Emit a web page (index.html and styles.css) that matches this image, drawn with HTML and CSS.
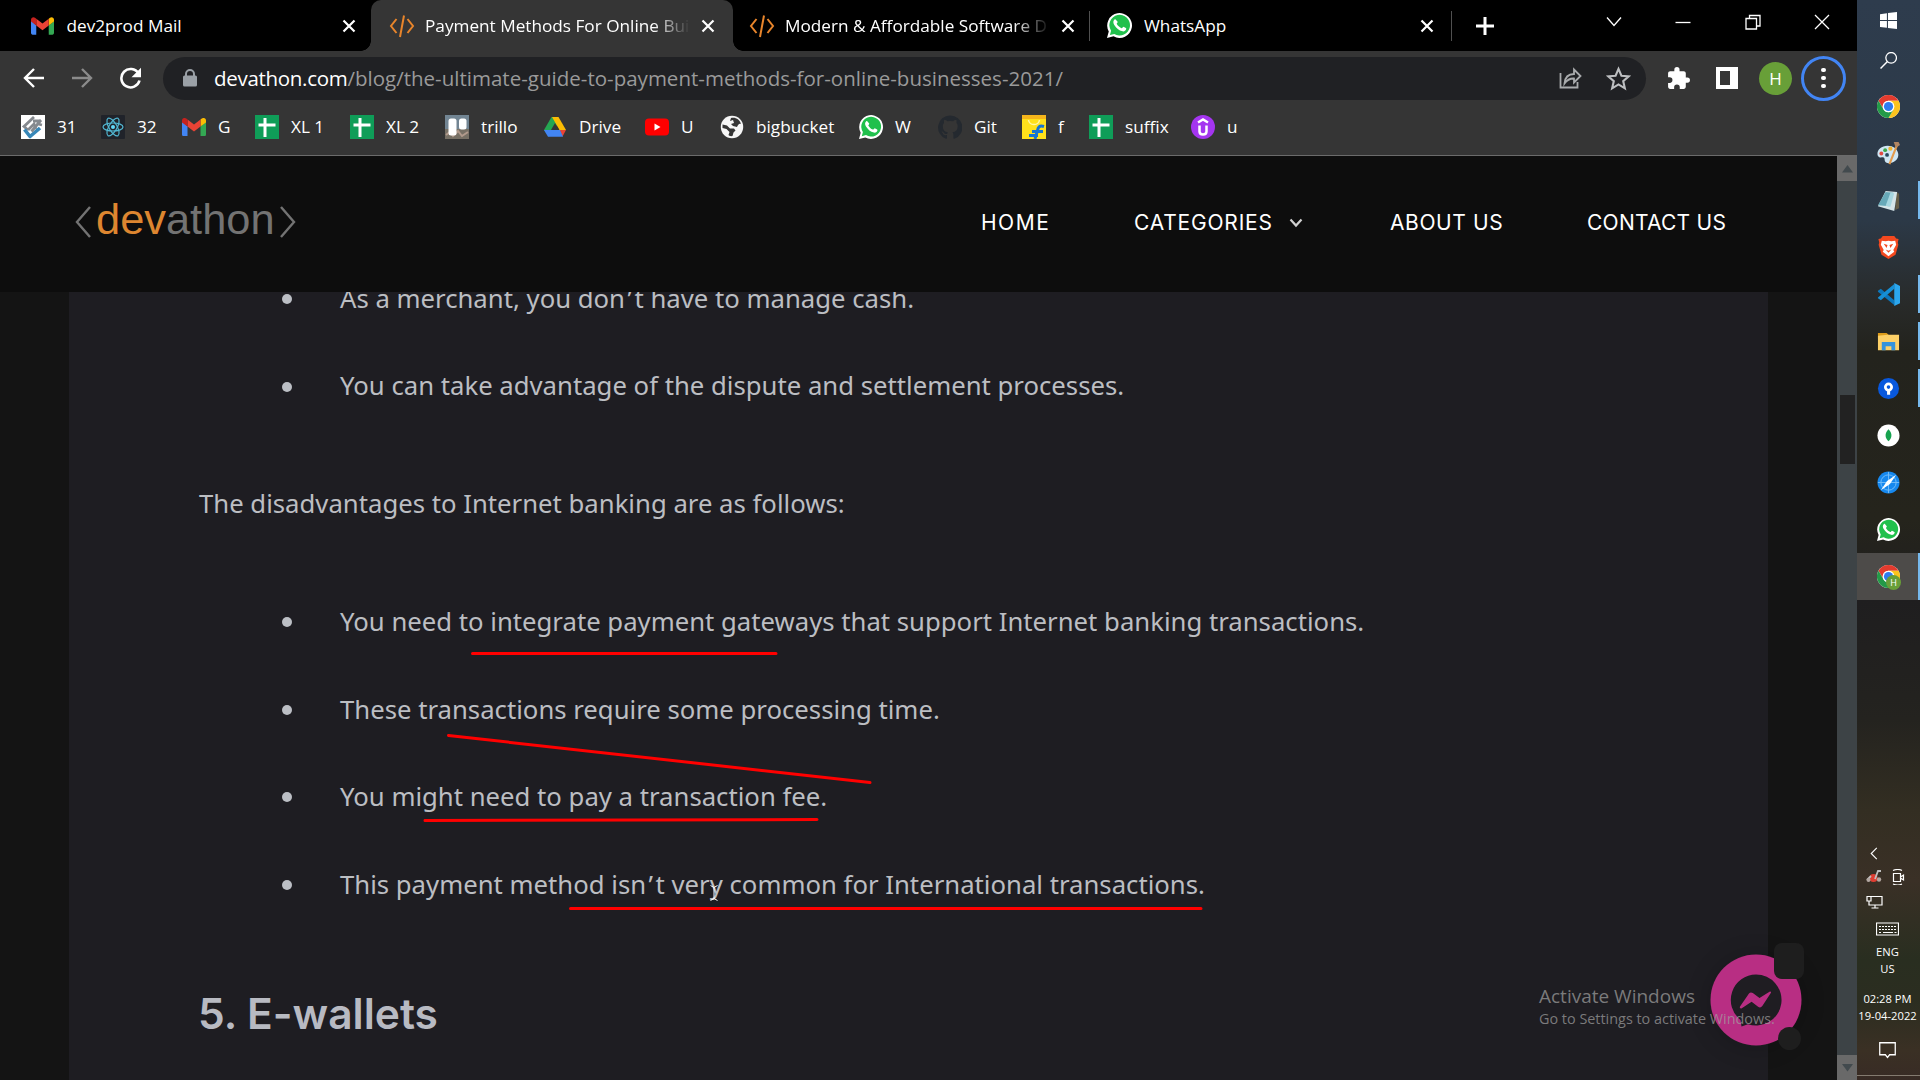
FILE: index.html
```html
<!DOCTYPE html>
<html lang="en">
<head>
<meta charset="utf-8">
<title>Payment Methods For Online Businesses</title>
<link rel="stylesheet" href="styles.css">
</head>
<body>
<svg class="defs" width="0" height="0">
  <symbol id="gmail" viewBox="0 0 24 18"><path fill="#4285f4" d="M0 3v13.4C0 17.300.7 18 1.600 18H5.500V8.500z"/><path fill="#34a853" d="M18.500 18h3.900c.9 0 1.600-.7 1.600-1.600V4l-5.500 4.500z"/><path fill="#fbbc04" d="M18.500 1.500v7L24 4.400V2.500c0-2.300-2.500-3.200-4.200-2z"/><path fill="#ea4335" d="M5.500 8.500v-7L12 6.500l6.500-5v7L12 13.400z"/><path fill="#c5221f" d="M0 2.500v1.900l5.500 4.100v-7L4.200.5C2.500-.7 0 .200 0 2.500z"/></symbol>
  <symbol id="sheet" viewBox="0 0 24 24"><rect width="24" height="24" fill="#0f9d58"/><path d="M10 3v19M3.500 10h17" stroke="#fff" stroke-width="3"/></symbol>
  <symbol id="whatsapp" viewBox="0 0 24 24"><path fill="#fff" d="M0 24l1.700-6.200A11.900 11.900 0 1 1 6.300 22.400z"/><path fill="#20c04c" d="M2.800 21.200l1.100-4.100a9.900 9.900 0 1 1 3.100 3z"/><path fill="#fff" d="M8.700 6.700c-.4-.8-1-.8-1.500-.4-1.600 1.500-1.300 3.400-.2 5.100 2 3 4.300 5.300 7.900 6.200 1.800.3 3.500-.9 3.600-2.700 0-.4-2.400-1.600-2.900-1.700-.7.400-1 1.600-1.700 1.400-2.100-.9-3.500-2.200-4.600-4.200.2-.8 1.200-1.100.9-1.900z"/></symbol>
  <symbol id="chrome" viewBox="0 0 24 24"><circle cx="12" cy="12" r="12" fill="#fff"/><path fill="#e33b2e" d="M12 0a12 12 0 0 1 10.400 6H12a6 6 0 0 0-5.200 9L1.600 6A12 12 0 0 1 12 0z"/><path fill="#fcc31e" d="M22.400 6A12 12 0 0 1 12 24l5.200-9A6 6 0 0 0 12 6z"/><path fill="#249a48" d="M1.600 6A12 12 0 0 0 12 24l5.200-9a6 6 0 0 1-10.400 0z"/><circle cx="12" cy="12" r="6" fill="#fff"/><circle cx="12" cy="12" r="4.800" fill="#2f7cf0"/></symbol>
  <symbol id="code" viewBox="0 0 26 24"><path d="M7.500 5L2 12l5.500 7M18.500 5l5.500 7-5.500 7M15 1.500L11 23" fill="none" stroke="#e8852b" stroke-width="2"/></symbol>
  <symbol id="close" viewBox="0 0 14 14"><path d="M1.500 1.500l11 11M12.500 1.500l-11 11" stroke="#fff" stroke-width="2.200"/></symbol>
</svg>

<div class="desktop">
  <div class="browser">
    <div class="tabs">
      <div class="tab tab-mail"><svg class="mail"><use href="#gmail"/></svg><span class="tab-title">dev2prod Mail</span><svg class="x"><use href="#close"/></svg></div>
      <div class="tab tab-active"><svg class="code"><use href="#code"/></svg><span class="tab-title fade">Payment Methods For Online Bui</span><svg class="x"><use href="#close"/></svg></div>
      <div class="tab tab-soft"><svg class="code"><use href="#code"/></svg><span class="tab-title fade dim">Modern &amp; Affordable Software D</span><svg class="x"><use href="#close"/></svg></div>
      <div class="tab tab-wa"><svg class="wa"><use href="#whatsapp"/></svg><span class="tab-title">WhatsApp</span><svg class="x"><use href="#close"/></svg></div>
      <svg class="plus" viewBox="0 0 18 18"><path d="M9 0v18M0 9h18" stroke="#fff" stroke-width="3"/></svg>
      <div class="window-controls">
        <svg viewBox="0 0 16 16"><path d="M1 3.500l7 8 7-8"/></svg>
        <svg viewBox="0 0 16 16"><path d="M.5 8.500h15"/></svg>
        <svg viewBox="0 0 16 16"><path d="M1 4.500h10.500V15H1zM4.500 4.500V1.500H15V12h-3.500"/></svg>
        <svg viewBox="0 0 16 16"><path d="M1 1l14 14M15 1L1 15"/></svg>
      </div>
    </div>

    <div class="toolbar">
      <svg viewBox="0 0 22 22"><path d="M21 11H2.500M11 2L2 11l9 9" fill="none" stroke="#fff" stroke-width="2.400"/></svg>
      <svg viewBox="0 0 22 22"><path d="M1 11h18.500M11 2l9 9-9 9" fill="none" stroke="#8b8b8b" stroke-width="2.400"/></svg>
      <svg viewBox="0 0 22 22"><path d="M19 6.500A9.200 9.200 0 1 0 20 13.500" fill="none" stroke="#fff" stroke-width="2.600"/><path d="M21.500.8v9.500H12z" fill="#fff"/></svg>
      <div class="omnibox">
        <svg class="lock" viewBox="0 0 14 18"><path d="M3 7V5a4 4 0 0 1 8 0v2" fill="none" stroke="#9aa0a6" stroke-width="2"/><rect y="6.500" width="14" height="11" rx="1.500" fill="#9aa0a6"/></svg>
        <span class="url"><b>devathon.com</b>/blog/the-ultimate-guide-to-payment-methods-for-online-businesses-2021/</span>
        <svg class="share" viewBox="0 0 24 24"><path d="M2 7v14.500h17V16M6 17.500c.5-6 4-9.500 9.500-9.500V3.500L22 10l-6.500 6.500V12.500c-4-.2-7 1.500-9.500 5z" fill="none" stroke="#a9abad" stroke-width="1.800"/></svg>
        <svg class="star" viewBox="0 0 24 24"><path d="M12 2.800l2.800 6.500 7 .6-5.300 4.600 1.600 6.900-6.100-3.700-6.100 3.700 1.600-6.900L2.200 9.900l7-.6z" fill="none" stroke="#bdbfc1" stroke-width="2"/></svg>
      </div>
      <svg class="puzzle" viewBox="0 0 24 24"><path fill="#fff" d="M20.500 11H19V7c0-1.100-.9-2-2-2h-4V3.500a2.500 2.500 0 0 0-5 0V5H4c-1.100 0-2 .9-2 2v3.800h1.500a2.700 2.700 0 0 1 0 5.400H2V20c0 1.100.9 2 2 2h3.800v-1.500a2.700 2.700 0 0 1 5.400 0V22H17c1.100 0 2-.9 2-2v-4h1.500a2.500 2.500 0 0 0 0-5z"/></svg>
      <svg class="panel" viewBox="0 0 22 22"><path fill="#fff" fill-rule="evenodd" d="M0 0h22v22H0zM4 4v14h10V4z"/></svg>
      <div class="avatar">H</div>
      <div class="kebab"><i></i><i></i><i></i></div>
    </div>

    <div class="bookmarks">
      <div><svg viewBox="0 0 24 24"><rect width="24" height="24" fill="#fff"/><path d="M13 2L3 11.500 7 15M7 15l6-6 2 5" fill="none" stroke="#85898e" stroke-width="2.800"/><path d="M3.500 14.500l5.500 7 10-8.500" fill="none" stroke="#3787b8" stroke-width="3.600" stroke-linejoin="round"/><path d="M12 6l8 0M20 5L10.500 16.500M17 9l4 1" fill="none" stroke="#85898e" stroke-width="2.800"/></svg>31</div>
      <div><svg viewBox="0 0 24 24"><rect width="24" height="24" rx="1" fill="#20232a"/><g fill="none" stroke="#52b8d3" stroke-width="1.200"><ellipse cx="12" cy="12" rx="10" ry="4"/><ellipse cx="12" cy="12" rx="10" ry="4" transform="rotate(60 12 12)"/><ellipse cx="12" cy="12" rx="10" ry="4" transform="rotate(120 12 12)"/></g><circle cx="12" cy="12" r="2" fill="#61dafb"/></svg>32</div>
      <div><svg><use href="#gmail" y="3" height="18"/></svg>G</div>
      <div><svg><use href="#sheet"/></svg>XL 1</div>
      <div><svg><use href="#sheet"/></svg>XL 2</div>
      <div><svg viewBox="0 0 24 24"><rect width="24" height="24" fill="#728593"/><path d="M0 14h24v10H0z" fill="#777065"/><path d="M1 20l4-3 3 4 5-5 4 5 6-4" stroke="#b19a8c" fill="none" stroke-width="2"/><rect x="3.500" y="3.500" width="8" height="17" rx="2.500" fill="#fff"/><rect x="14" y="3.500" width="7.500" height="11" rx="2.500" fill="#fff"/></svg>trillo</div>
      <div><svg viewBox="0 0 24 24"><path fill="#25a652" d="M8.500 2h4l3.300 5.700L6 21.800 1 15z"/><path fill="#fbbc04" d="M9 2h6.500L23 15h-6.500z"/><path fill="#e94335" d="M16.500 15H23l-3.500 6.500z"/><path fill="#4285f4" d="M1 15h16l3 6.800H5z"/><path fill="#353535" d="M12 8l-4 7h8z"/></svg>Drive</div>
      <div><svg viewBox="0 0 24 24"><rect y="3.500" width="24" height="17" rx="4" fill="#f00"/><path d="M9.500 8.500v7l6-3.500z" fill="#fff"/></svg>U</div>
      <div><svg viewBox="0 0 24 24"><circle cx="12" cy="12" r="11.200" fill="#f6f6f6"/><path fill="#353535" d="M2.500 9.500l4.500 1 3 3h4l1.500 2-2 2-1 3.500c-2 .5-4-.5-4-1l1-3-3-3-4-1zM11 3c5-1 9 2 10 6-2-1-3 1-4 3l-4-1-2-2 3-1-1-3-3 1z"/></svg>bigbucket</div>
      <div><svg><use href="#whatsapp"/></svg>W</div>
      <div><svg viewBox="0 0 24 24"><path fill="#24292f" d="M12 .5a12 12 0 0 0-4 23.300c.7.1 1-.3 1-.8v-3c-3.300.7-4-1.200-4-1.500-.5-1.200-1.600-1.800-1.600-1.800 1.600-.7 2.300 1 3 1.800.9.8 1.900.7 2.800.4.1-.8.5-1.300.8-1.600-3.500-.4-5.200-2.300-5.200-6 0-1.300.5-2.400 1.200-3.200-.1-1.100-.1-2.300.2-3.300 1.400 0 2.500.8 3.300 1.400a12 12 0 0 1 5.500 0c.8-.6 2-1.400 3.300-1.400.3 1 .3 2.200.2 3.300.8.8 1.200 1.900 1.200 3.200 0 3.700-1.700 5.600-5.300 6 .6.500 1 1.300 1 2.500V23c0 .5.300.9 1 .8A12 12 0 0 0 12 .5z"/></svg>Git</div>
      <div><svg viewBox="0 0 24 24"><rect width="24" height="24" fill="#ffe11b"/><rect width="24" height="4" fill="#f5b51b"/><path d="M6.500 5c1 6 10 6 11 0" fill="none" stroke="#fff6a8" stroke-width="1.500"/><path d="M22 11.500c-5-1.500-6 1-6.500 4L13 24M10 16.500h11M7 20.500h9" fill="none" stroke="#1675d1" stroke-width="3"/></svg>f</div>
      <div><svg><use href="#sheet"/></svg>suffix</div>
      <div><svg viewBox="0 0 24 24"><circle cx="12" cy="12" r="12" fill="#a435f0"/><path d="M7 7.500L12 4.500l5 3M8.500 10.500v6c0 4 7 4 7 0v-6" fill="none" stroke="#fff" stroke-width="2.500"/></svg>u</div>
    </div>

    <div class="viewport">
      <div class="page">
        <header class="site-header">
          <div class="logo"><svg viewBox="0 0 16 34"><path d="M15 2L2 17l13 15"/></svg><span><em>dev</em>athon</span><svg viewBox="0 0 16 34"><path d="M1 2l13 15L1 32"/></svg></div>
          <nav><span class="home">HOME</span><span class="cat">CATEGORIES <svg viewBox="0 0 14 10"><path d="M1.500 1.500L7 7.500l5.500-6" fill="none" stroke="#d0d0d0" stroke-width="2.200"/></svg></span><span class="about">ABOUT US</span><span class="contact">CONTACT US</span></nav>
        </header>
        <main class="clip">
          <article>
            <ul>
              <li><span>As a merchant, you don<i>’</i>t have to manage cash.</span></li>
              <li><span>You can take advantage of the dispute and settlement processes.</span></li>
            </ul>
            <p>The disadvantages to Internet banking are as follows:</p>
            <ul>
              <li><span>You need to integrate payment gateways that support Internet banking transactions.</span></li>
              <li><span>These transactions require some processing time.</span></li>
              <li><span>You might need to pay a transaction fee.</span></li>
              <li><span>This payment method isn<i>’</i>t very common for International transactions.</span></li>
            </ul>
            <h2>5. E-wallets</h2>
          </article>
        </main>
      </div>
      <div class="scrollbar">
        <div class="scroll-btn"><svg viewBox="0 0 11 8"><path d="M0 7.500L5.500 0 11 7.500z"/></svg></div>
        <div class="thumb"></div>
        <div class="scroll-btn"><svg viewBox="0 0 11 8"><path d="M0 0h11L5.500 7.500z"/></svg></div>
      </div>
    </div>
  </div>

  <aside class="taskbar">
    <div class="slot win"><svg viewBox="0 0 16 16"><path fill="#fff" d="M0 2l6.500-.9v6.400H0zM7.500 1L16 0v7.500H7.500zM0 8.500h6.500v6.400L0 14zM7.500 8.500H16V16l-8.500-1z"/></svg></div>
    <div class="slot find"><svg viewBox="0 0 16 16"><circle cx="10.500" cy="5.500" r="5" fill="none" stroke="#fff" stroke-width="1.200"/><path d="M7 9L.5 15.500" stroke="#fff" stroke-width="1.400"/></svg></div>
    <div class="slot"><svg><use href="#chrome"/></svg></div>
    <div class="slot"><svg viewBox="0 0 24 24"><path fill="#cfe6f3" d="M11 4c-6 0-11 4-10.500 9 .3 3 3 3.500 5 3 2-.4 2.500 1 2.500 3 .3 3 4 4 8 2.500 5-2 7-6 6-10C21 7 17 4 11 4z"/><circle cx="4.500" cy="12" r="2" fill="#e24b43"/><circle cx="8.500" cy="8.500" r="2" fill="#3fa84c"/><circle cx="14" cy="7" r="2.200" fill="#f0b432"/><circle cx="10.500" cy="13.500" r="2" fill="#294860"/><path d="M21 3l-8 20" stroke="#e39a4b" stroke-width="2.200"/><path d="M17.500 0h5L24 3l-4.500 3z" fill="#b18562"/></svg></div>
    <div class="slot open"><svg viewBox="0 0 24 24"><path fill="#655e48" d="M20 3l3 2v15l-4 2z"/><path fill="#d5e5e8" d="M9 2l12 1-3 20L1 18z"/><path fill="#67a9b8" d="M9 3l8 1-4 14L1 17z"/><path fill="#a6d6df" d="M14 4l4 .5-4 14-5-1z"/></svg></div>
    <div class="slot"><svg viewBox="0 0 24 24"><path fill="#f4491f" d="M6 0h12l2 2.500 2.500.5-.8 4 .6 2-3 10.500L12 24l-7.300-4.500-3-10.500.6-2-.8-4L4 2.500z"/><path fill="#fff" d="M5 5l4 .5 3-.5 3 .5 4-.5 1 4-3 5.500 1 2L12 21l-6-4.500 1-2L4 9z"/><path fill="#f4491f" d="M7 8l4 1.500-1 3zM17 8l-4 1.500 1 3zM9 14l3 1.500 3-1.500-3 3.500z"/></svg></div>
    <div class="slot open"><svg viewBox="0 0 24 24"><path d="M1 8l3-2 14 12v5L1 9z" fill="#0c77bd"/><path d="M1 16l3 2L18 6V1L1 15z" fill="#168fd5"/><path d="M18 0l6 3v18l-6 3z" fill="#2ba7ef"/></svg></div>
    <div class="slot open"><svg viewBox="0 0 24 24"><path fill="#dd9c1b" d="M1 3h9l2 2v4H1z"/><path fill="#fdd067" d="M1 6l10-1h12v16H1z"/><path fill="#3593db" d="M5 12.500h14V21h-4v-4H9v4H5z"/></svg></div>
    <div class="slot open"><svg viewBox="0 0 24 24"><circle cx="12" cy="12" r="11" fill="#0858dd"/><circle cx="12" cy="10.500" r="3.300" fill="none" stroke="#fff" stroke-width="2.800"/><path d="M10.500 13h3.200v5.500h-3.200z" fill="#fff"/></svg></div>
    <div class="slot"><svg viewBox="0 0 24 24"><circle cx="12" cy="12" r="11.500" fill="#fff"/><path d="M12 5.500c5 5 3 10 0 12.500-3-2.500-5-7.500 0-12.500z" fill="#17a34f"/></svg></div>
    <div class="slot"><svg viewBox="0 0 24 24"><circle cx="12" cy="12" r="11.500" fill="#1688ee"/><g fill="none" stroke="#73bcf8"><circle cx="12" cy="12" r="8"/><path d="M12 1v22M1 12h22"/></g><path d="M20 4L10.500 10.500 4 20l9.500-6.500z" fill="#fff"/></svg></div>
    <div class="slot"><svg><use href="#whatsapp"/></svg></div>
    <div class="slot open current"><svg><use href="#chrome"/></svg><span class="badge">H</span></div>
    <div class="tray">
      <svg class="up" viewBox="0 0 8 14"><path d="M7 1L1 7l6 6"/></svg>
      <div class="pair">
        <svg viewBox="0 0 16 16"><circle cx="7.500" cy="9" r="4" fill="#df3e32" stroke="none"/><path d="M1 11l4-4M9 10l3-8h3" stroke="#bfbfbf" stroke-width="1.800"/><circle cx="2.500" cy="11" r="2" fill="#b3a7a1" stroke="none"/><circle cx="13" cy="10.500" r="2.200" fill="#b3a7a1" stroke="none"/></svg>
        <svg viewBox="0 0 16 16"><path d="M3.500 4.500h7v8h-7zM10.500 8l3-2v5l-3-2M3 1.500Q8-.5 12 1.500M3 15q5 2 9 0"/></svg>
      </div>
      <svg class="net" viewBox="0 0 16 14"><path d="M5 1.500h10.500v8.500H2.500V6M.5 1.500h4V6h-4zM8.500 10v3M5 13h7"/></svg>
      <svg class="keys" viewBox="0 0 23 13"><path d="M.5.500h22v12H.5z"/><path d="M3 4h17M3 7h17" stroke-dasharray="2 1"/><path d="M3 10h2M7 10h10M18.500 10h2"/></svg>
      <div class="lang">ENG<br>US</div>
      <div class="clock">02:28 PM<br>19-04-2022</div>
      <svg class="note" viewBox="0 0 16 16"><path d="M.7.700h14.600V12H10l-2 2.500L6 12H.7z"/></svg>
    </div>
  </aside>
</div>

<div class="chat">
  <svg viewBox="0 0 92 92"><circle cx="46" cy="46" r="45.500" fill="#b82e83"/><path fill="#1f1d22" d="M46 20.500a25.500 25.500 0 1 1-8 49.700l-6.500 2.300-1-6.500A25.500 25.500 0 0 1 46 20.500z"/><path fill="#b82e83" d="M30 52.500l9-13c1-1.200 2.500-1.300 3.800-.4l6.700 5 10-6.300c1.200-.7 2 .3 1.300 1.300l-8.500 13c-1.200 1.600-2.800 1.700-4.200.6l-6.500-4.900-9.800 6.400c-1.300.8-2.600-.5-1.800-1.700z"/></svg>
  <i class="chat-count"></i><i class="chat-status"></i>
</div>
<div class="watermark"><div>Activate Windows</div><p>Go to Settings to activate Windows.</p></div>
<svg class="ink" viewBox="0 0 1920 1080"><path d="M472.500 653.500H776M448.500 735.500L870 782.500M425 820.500L817 819.500M570.500 908.500H1201"/></svg>
<svg class="caret" viewBox="0 0 8 16"><path d="M.5.500L4 2.500 7.500.5M4 2.500v11M.5 15.500L4 13.500l3.500 2" fill="none" stroke="#fff"/></svg>
</body>
</html>
```
FILE: styles.css
```css
* { box-sizing: border-box; }
body { margin: 0; width: 1920px; height: 1080px; overflow: hidden; background: #000; font-family: "Open Sans", "Noto Sans", sans-serif; color: #fff; }
svg { display: block; flex: none; }
.defs { position: absolute; }
.desktop { display: flex; height: 1080px; }
.browser { width: 1857px; display: flex; flex-direction: column; }

/* tab strip */
.tabs { display: flex; height: 51px; background: #000; font-size: 17.2px; line-height: 51px; }
.tab { display: flex; align-items: center; position: relative; white-space: nowrap; }
.tab-title { flex: 1; overflow: hidden; }
.tab-mail { width: 371px; padding: 0 15px 0 31px; }
.tab-active { width: 362px; padding: 0 18px; background: #353535; border-radius: 10px 10px 0 0; }
.tab-active::before, .tab-active::after { content: ""; position: absolute; bottom: 0; width: 10px; height: 10px; }
.tab-active::before { left: -10px; background: radial-gradient(circle at 0 0, transparent 9.500px, #353535 10px); }
.tab-active::after { right: -10px; background: radial-gradient(circle at 100% 0, transparent 9.500px, #353535 10px); }
.tab-soft { width: 358px; padding: 0 15px 0 16px; border-right: 1px solid transparent; }
.tab-wa { width: 361px; padding: 0 18px 0 16px; }
.tab-soft::after, .tab-wa::after { content: ""; position: absolute; right: 0; top: 11px; width: 1px; height: 30px; background: #505050; }
.mail { width: 23px; height: 18px; margin-right: 12.500px; }
.code { width: 26px; height: 24px; margin-right: 10px; }
.wa { width: 25px; height: 25px; margin-right: 12px; }
.x { width: 14px; height: 14px; margin-left: 11px; }
.fade { -webkit-mask-image: linear-gradient(90deg, #000 86%, transparent); mask-image: linear-gradient(90deg, #000 86%, transparent); }
.plus { width: 18px; height: 18px; margin: 17px 0 0 24px; }
.window-controls { display: flex; gap: 53.500px; margin: 14px 0 0 auto; padding-right: 27px; }
.window-controls svg { width: 16px; height: 16px; fill: none; stroke: #fff; stroke-width: 1.300; }

/* toolbar */
.toolbar { display: flex; align-items: center; height: 55px; background: #353535; padding: 0 0 1px 23px; }
.toolbar > svg { width: 22px; height: 22px; margin-right: 26px; }
.toolbar > svg:nth-child(3) { margin-right: 21px; width: 23px; }
.omnibox { width: 1483px; height: 43px; border-radius: 22px; background: #202124; display: flex; align-items: center; padding: 0 15px 0 20px; }
.lock { width: 14px; height: 18px; }
.url { flex: 1; margin-left: 17px; font-size: 20.500px; line-height: 40px; color: #9a9a9a; letter-spacing: .01px; white-space: nowrap; }
.url b { font-weight: 400; color: #fff; letter-spacing: -.3px; }
.share { width: 25px; height: 24px; margin-right: 23px; }
.star { width: 25px; height: 25px; }
.toolbar > .puzzle { width: 25px; height: 25px; margin: 0 23px 0 20px; }
.toolbar > .panel { width: 22px; margin: 0 21px 0 2px; }
.avatar { width: 33px; height: 33px; border-radius: 50%; background: #689f38; font-size: 17px; line-height: 33px; text-align: center; }
.kebab { width: 45px; height: 45px; margin-left: 9px; border: 3px solid #4285f4; border-radius: 50%; display: flex; flex-direction: column; align-items: center; justify-content: center; gap: 3.500px; }
.kebab i { width: 4.500px; height: 4.500px; border-radius: 50%; background: #fff; }

/* bookmarks */
.bookmarks { display: grid; grid-template-columns: 80px 81px 73px 95px 95px 98px 102px 75px 139px 79px 84px 67px 102px 80px; align-items: center; height: 50px; padding: 0 0 8px 21px; background: #353535; border-bottom: 1px solid #6b6b6b; font-size: 17.200px; line-height: 24px; box-sizing: border-box; }
.bookmarks div { display: flex; align-items: center; gap: 12px; white-space: nowrap; }
.bookmarks svg { width: 24px; height: 24px; }

/* page */
.viewport { display: flex; flex: 1; min-height: 0; }
.page { width: 1837px; background: #141414; display: flex; flex-direction: column; }
.site-header { height: 136px; flex: none; background: #0d0d0d; display: flex; justify-content: space-between; padding-left: 75px; }
.logo { display: flex; align-items: flex-start; padding-top: 38px; font: 43.400px/50px "Liberation Sans", Arial, sans-serif; color: #737373; }
.logo em { font-style: normal; color: #dd8630; }
.logo svg { width: 16px; height: 34px; margin-top: 11px; fill: none; stroke: #737373; stroke-width: 2.400; }
.logo span { margin: 0 5px; }
nav { display: grid; grid-template-columns: 153px 256px 197px 250px; align-items: start; padding-top: 54px; font: 21px/26px Inter, "Noto Sans", sans-serif; }
nav span { white-space: nowrap; }
.home { letter-spacing: 1.500px; }
.cat { display: flex; gap: 16px; align-items: center; letter-spacing: .8px; }
.cat svg { width: 14px; height: 10px; }
.about { letter-spacing: .6px; }
.contact { letter-spacing: .25px; }
.clip { flex: 1; overflow: hidden; min-height: 0; }
article { width: 1699px; min-height: 100%; margin-left: 69px; padding: 0 130px; margin-top: -37px; padding-bottom: 100px; background: #1e1d22; color: #bcbec2; font: 25.710px/87.500px "Noto Sans", sans-serif; }
ul { margin: 0; padding: 0; list-style: none; }
li { display: flex; align-items: center; height: 87.600px; padding-left: 82.500px; white-space: nowrap; }
li::before { content: ""; width: 10px; height: 10px; margin: 1px 48.500px 0 0; border-radius: 50%; background: #bcbfc5; }
li i { font-style: normal; display: inline-block; width: 9.500px; text-align: center; }
li:nth-child(2) span { margin-top: -1px; }
p { margin: 30px 0 30px; }
h2 { margin: 38px 0 0 -1px; font: 600 42.500px/96px Inter, "Noto Sans", sans-serif; color: #b8bac2; }
p + ul li:nth-child(2) span { margin-top: 1px; }

.scrollbar { width: 20px; background: #3d4346; display: flex; flex-direction: column; justify-content: space-between; }
.scroll-btn { height: 25px; background: #696969; display: flex; align-items: center; justify-content: center; }
.scroll-btn svg { width: 11px; height: 8px; fill: #424a4e; }
.thumb { width: 15px; height: 69px; margin: 214px 3px auto; background: #222; }

/* taskbar */
.taskbar { width: 63px; display: flex; flex-direction: column; background: linear-gradient(#2e3c4d 0, #2c3947 220px, #282a29 305px, #23231d 350px, #25241c 520px, #1f1e1f 600px, #24231f 720px, #332e22 810px, #3a3026 880px, #292e20 960px, #2b2d20 1000px, #3a3024 1050px, #382b25 1080px); }
.slot { display: flex; justify-content: center; align-items: center; height: 47px; padding-right: 1px; position: relative; }
.slot svg { width: 23px; height: 23px; }
.win { height: 40px; }
.find { height: 40px; margin-bottom: 2.500px; }
.win svg, .find svg { width: 17px; height: 17px; }
.slot.open::after { content: ""; position: absolute; right: 0; top: 4px; width: 2px; height: 38px; background: #76b9ed; }
.slot.current { background: #4d4b49; }
.slot.current::after { top: 0; height: 47px; }
.badge { position: absolute; left: 29px; top: 22px; width: 15px; height: 15px; border-radius: 50%; background: #689f38; font-size: 9px; line-height: 15px; text-align: center; }
.tray { position: relative; margin-top: auto; height: 480px; padding: 247px 2px 0 0; display: flex; flex-direction: column; align-items: center; border: 0; }
.tray svg { fill: none; stroke: #fff; stroke-width: 1.200; }
.tray .up { width: 8px; height: 13px; margin: 0 28px 9px 0; }
.pair { display: flex; gap: 8px; margin: 0 4px 10px 0; }
.pair svg { width: 16px; height: 16px; }
.net { width: 17px; height: 14px; margin-right: 27px; }
.keys { width: 23px; height: 14px; margin-top: 13px; }
.lang, .clock { font-size: 11.200px; line-height: 17px; text-align: center; white-space: nowrap; }
.lang { margin-top: 7px; }
.clock { margin-top: 13px; }
.note { width: 17px; height: 17px; margin-top: 18px; }
.tray::after { content: ""; position: absolute; left: 0; right: 0; bottom: 4px; height: 1px; background: #847b70; }

/* overlays */
.chat { position: absolute; left: 1709.500px; top: 954px; width: 92px; height: 92px; border-radius: 50%; box-shadow: 0 2px 24px rgba(0, 0, 0, .2); }
.chat i { position: absolute; background: #1e1e1e; }
.chat-count { left: 64.500px; top: -11px; width: 30px; height: 36px; border-radius: 8px; }
.chat-status { left: 68.500px; top: 73px; width: 23px; height: 23px; border-radius: 50%; }
.watermark { position: absolute; left: 1539px; top: 982px; font-size: 19px; line-height: 28px; color: rgba(160, 160, 160, .72); white-space: nowrap; }
.watermark p { margin: 0; font-size: 14.400px; line-height: 18px; }
.ink { position: absolute; left: 0; top: 0; width: 1920px; height: 1080px; fill: none; stroke: #f00; stroke-width: 3; stroke-linecap: round; pointer-events: none; }
.caret { position: absolute; left: 710px; top: 885px; width: 8px; height: 16px; }
```
